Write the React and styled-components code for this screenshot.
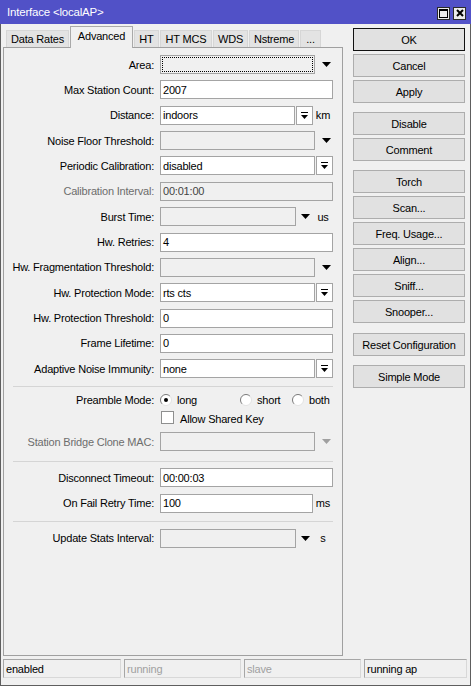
import styled, { createGlobalStyle } from 'styled-components'

const GlobalStyle = createGlobalStyle`
  html, body { margin: 0; padding: 0; background: #f0f0f0; }
  body {
    font-family: "Liberation Sans", Arial, sans-serif;
    font-size: 11px;
    color: #000;
  }
  * { box-sizing: border-box; }
`

const Window = styled.div`
  width: 471px;
  height: 686px;
  background: #f0f0f0;
  border: 1px solid #5e5e5e;
  border-top: 0;
  display: flex;
  flex-direction: column;
  letter-spacing: -0.2px;
`

const TitleBar = styled.div`
  height: 24px;
  margin: 0 -1px;
  background: #5151c7;
  color: #fff;
  display: flex;
  align-items: center;
  justify-content: space-between;
  padding: 0 5px 0 7px;
  font-size: 11.5px;
`

const TitleButtons = styled.div`
  display: flex;
  gap: 3px;
  margin-top: 2px;
`

const TitleBtn = styled.span`
  width: 13px;
  height: 13px;
  background: #ececec;
  border: 1px solid #2b2b2b;
  display: flex;
  align-items: center;
  justify-content: center;
`

const Main = styled.div`
  display: flex;
  height: 632px;
`

const LeftCol = styled.div`
  margin-left: 2px;
  width: 340px;
  display: flex;
  flex-direction: column;
`

const TabRow = styled.div`
  height: 23px;
  display: flex;
  align-items: flex-end;
  padding-left: 3px;
  position: relative;
  z-index: 1;
`

const Tab = styled.div`
  width: ${({ $w }) => $w}px;
  height: ${({ $active }) => ($active ? '22px' : '17px')};
  margin-bottom: ${({ $active }) => ($active ? '-1px' : '0')};
  margin-right: 1px;
  background: ${({ $active }) => ($active ? '#f0f0f0' : '#e3e3e3')};
  border: 1px solid ${({ $active }) => ($active ? '#a9a9a9' : '#d6d6d6')};
  border-bottom: 0;
  display: flex;
  align-items: center;
  justify-content: center;
  padding-bottom: ${({ $active }) => ($active ? '4px' : '0')};
  white-space: nowrap;
`

const Panel = styled.div`
  height: 609px;
  border: 1px solid #a0a0a0;
  padding-top: 7px;
  display: flex;
  flex-direction: column;
`

const Row = styled.div`
  display: flex;
  align-items: center;
  height: 19px;
  margin-top: ${({ $mt }) => $mt ?? 6.36}px;
`

const Label = styled.div`
  width: 150px;
  margin-right: 6px;
  text-align: right;
  white-space: nowrap;
  color: ${({ $dim }) => ($dim ? '#6d6d6d' : '#000')};
`

const Field = styled.div`
  width: ${({ $w }) => $w}px;
  height: 19px;
  border: 1px solid #a4a4a4;
  background: ${({ $gray }) => ($gray ? '#f0f0f0' : '#fff')};
  color: ${({ $dimText }) => ($dimText ? '#444' : '#000')};
  padding-left: 2px;
  display: flex;
  align-items: center;
  white-space: nowrap;
  outline: ${({ $focus }) => ($focus ? '1px dotted #000' : 'none')};
  outline-offset: -3px;
`

const ArrowBox = styled.div`
  width: ${({ $w }) => $w || 18}px;
  height: 19px;
  display: flex;
  align-items: center;
  justify-content: center;
  padding-left: ${({ $pl }) => $pl || 0}px;
`

const ComboBtn = styled.div`
  width: 17px;
  height: 19px;
  margin-left: 1px;
  border: 1px solid #a4a4a4;
  background: #fff;
  display: flex;
  align-items: center;
  justify-content: center;
`

const Unit = styled.div`
  width: 20px;
  text-align: center;
`

const Divider = styled.div`
  height: 1px;
  background: #d5d5d5;
  margin: ${({ $m }) => $m};
  margin-left: 9px;
  width: 320px;
`

const RadioOpt = styled.label`
  display: flex;
  align-items: center;
  gap: 5px;
  width: ${({ $w }) => $w}px;
`

const CheckOpt = styled.label`
  display: flex;
  align-items: center;
  gap: 6px;
  margin-left: 157px;
`

const CheckBox = styled.span`
  width: 13px;
  height: 13px;
  background: #fff;
  border: 1px solid #8e8f8f;
  margin-top: -3px;
`

const RightCol = styled.div`
  margin-left: 10px;
  width: 112px;
  padding-top: 4px;
  display: flex;
  flex-direction: column;
`

const Button = styled.div`
  height: 23px;
  margin-top: ${({ $mt }) => $mt ?? 3}px;
  background: #e1e1e1;
  border: 1px solid ${({ $default }) => ($default ? '#111' : '#adadad')};
  display: flex;
  align-items: center;
  justify-content: center;
  white-space: nowrap;
`

const StatusBar = styled.div`
  display: flex;
  gap: 3px;
  margin: 3px 0 0 2px;
  height: 19px;
`

const StatusCell = styled.div`
  width: ${({ $w }) => $w}px;
  border: 1px solid #a6a6a6;
  border-right-color: #d8d8d8;
  border-bottom-color: #d8d8d8;
  padding-left: 2px;
  display: flex;
  align-items: center;
  color: ${({ $dim }) => ($dim ? '#a0a0a0' : '#000')};
`

const Arrow = ({ dim }) => (
  <svg width="9" height="5" viewBox="0 0 9 5">
    <polygon points="0,0 9,0 4.5,5" fill={dim ? '#a0a0a0' : '#000'} />
  </svg>
)

const ComboIcon = () => (
  <svg width="7" height="7" viewBox="0 0 7 7">
    <rect x="0" y="0" width="7" height="1" fill="#000" />
    <polygon points="0,3 7,3 3.5,7" fill="#000" />
  </svg>
)

const Radio = ({ checked }) => (
  <svg width="12" height="12" viewBox="0 0 12 12">
    <circle cx="6" cy="6" r="5.5" fill="#fff" />
    <path d="M2.1 9.9 A5.5 5.5 0 0 1 9.9 2.1" stroke="#7a7a7a" fill="none" />
    <path d="M9.9 2.1 A5.5 5.5 0 0 1 2.1 9.9" stroke="#e2e2e2" fill="none" />
    {checked && <circle cx="6" cy="6" r="2" fill="#000" />}
  </svg>
)

const tabs = [
  { name: 'Data Rates', w: 63 },
  { name: 'Advanced', w: 63, active: true },
  { name: 'HT', w: 25 },
  { name: 'HT MCS', w: 52 },
  { name: 'WDS', w: 35 },
  { name: 'Nstreme', w: 50 },
  { name: '...', w: 21 },
]

const buttons = [
  { name: 'OK', def: true, mt: 0 },
  { name: 'Cancel' },
  { name: 'Apply' },
  { name: 'Disable', mt: 9 },
  { name: 'Comment' },
  { name: 'Torch', mt: 9 },
  { name: 'Scan...' },
  { name: 'Freq. Usage...' },
  { name: 'Align...' },
  { name: 'Sniff...' },
  { name: 'Snooper...' },
  { name: 'Reset Configuration', mt: 10 },
  { name: 'Simple Mode', mt: 9 },
]

const status = [
  { text: 'enabled', w: 118 },
  { text: 'running', w: 117, dim: true },
  { text: 'slave', w: 117, dim: true },
  { text: 'running ap', w: 103 },
]

const App = () => {
  return (
    <>
      <GlobalStyle />
      <Window>
        <TitleBar>
          <span>Interface &lt;localAP&gt;</span>
          <TitleButtons>
            <TitleBtn>
              <svg width="9" height="9" viewBox="0 0 9 9">
                <rect x="0.5" y="0.5" width="8" height="8" fill="none" stroke="#000" />
                <rect x="0" y="0" width="9" height="2" fill="#000" />
              </svg>
            </TitleBtn>
            <TitleBtn>
              <svg width="8" height="8" viewBox="0 0 8 8">
                <path d="M1 1 L7 7 M7 1 L1 7" stroke="#000" strokeWidth="2" />
              </svg>
            </TitleBtn>
          </TitleButtons>
        </TitleBar>

        <Main>
          <LeftCol>
            <TabRow>
              {tabs.map((t) => (
                <Tab key={t.name} $w={t.w} $active={t.active}>{t.name}</Tab>
              ))}
            </TabRow>
            <Panel>
              <Row $mt={0}>
                <Label>Area:</Label>
                <Field $w={155} $gray $focus />
                <ArrowBox $pl={4}><Arrow /></ArrowBox>
              </Row>
              <Row>
                <Label>Max Station Count:</Label>
                <Field $w={173}>2007</Field>
              </Row>
              <Row>
                <Label>Distance:</Label>
                <Field $w={135}>indoors</Field>
                <ComboBtn><ComboIcon /></ComboBtn>
                <Unit>km</Unit>
              </Row>
              <Row>
                <Label>Noise Floor Threshold:</Label>
                <Field $w={155} $gray />
                <ArrowBox $pl={4}><Arrow /></ArrowBox>
              </Row>
              <Row>
                <Label>Periodic Calibration:</Label>
                <Field $w={155}>disabled</Field>
                <ComboBtn><ComboIcon /></ComboBtn>
              </Row>
              <Row>
                <Label $dim>Calibration Interval:</Label>
                <Field $w={173} $gray $dimText>00:01:00</Field>
              </Row>
              <Row>
                <Label>Burst Time:</Label>
                <Field $w={136} $gray />
                <ArrowBox $w={17} $pl={2}><Arrow /></ArrowBox>
                <Unit>us</Unit>
              </Row>
              <Row>
                <Label>Hw. Retries:</Label>
                <Field $w={173}>4</Field>
              </Row>
              <Row>
                <Label>Hw. Fragmentation Threshold:</Label>
                <Field $w={155} $gray />
                <ArrowBox $pl={4}><Arrow /></ArrowBox>
              </Row>
              <Row>
                <Label>Hw. Protection Mode:</Label>
                <Field $w={155}>rts cts</Field>
                <ComboBtn><ComboIcon /></ComboBtn>
              </Row>
              <Row>
                <Label>Hw. Protection Threshold:</Label>
                <Field $w={173}>0</Field>
              </Row>
              <Row>
                <Label>Frame Lifetime:</Label>
                <Field $w={173}>0</Field>
              </Row>
              <Row>
                <Label>Adaptive Noise Immunity:</Label>
                <Field $w={155}>none</Field>
                <ComboBtn><ComboIcon /></ComboBtn>
              </Row>

              <Divider $m="8px 0 3px" />

              <Row $mt={0}>
                <Label>Preamble Mode:</Label>
                <RadioOpt $w={80}><Radio checked /> long</RadioOpt>
                <RadioOpt $w={52}><Radio /> short</RadioOpt>
                <RadioOpt $w={42}><Radio /> both</RadioOpt>
              </Row>
              <Row $mt={0}>
                <CheckOpt><CheckBox /> Allow Shared Key</CheckOpt>
              </Row>
              <Row $mt={4}>
                <Label $dim>Station Bridge Clone MAC:</Label>
                <Field $w={155} $gray />
                <ArrowBox $pl={4}><Arrow dim /></ArrowBox>
              </Row>

              <Divider $m="10px 0 6px" />

              <Row $mt={0}>
                <Label>Disconnect Timeout:</Label>
                <Field $w={173}>00:00:03</Field>
              </Row>
              <Row>
                <Label>On Fail Retry Time:</Label>
                <Field $w={153}>100</Field>
                <Unit>ms</Unit>
              </Row>

              <Divider $m="8px 0 7px" />

              <Row $mt={0}>
                <Label>Update Stats Interval:</Label>
                <Field $w={136} $gray />
                <ArrowBox $w={17} $pl={2}><Arrow /></ArrowBox>
                <Unit>s</Unit>
              </Row>
            </Panel>
          </LeftCol>

          <RightCol>
            {buttons.map((b) => (
              <Button key={b.name} $default={b.def} $mt={b.mt}>{b.name}</Button>
            ))}
          </RightCol>
        </Main>

        <StatusBar>
          {status.map((s) => (
            <StatusCell key={s.text} $w={s.w} $dim={s.dim}>{s.text}</StatusCell>
          ))}
        </StatusBar>
      </Window>
    </>
  )
}

export default App
